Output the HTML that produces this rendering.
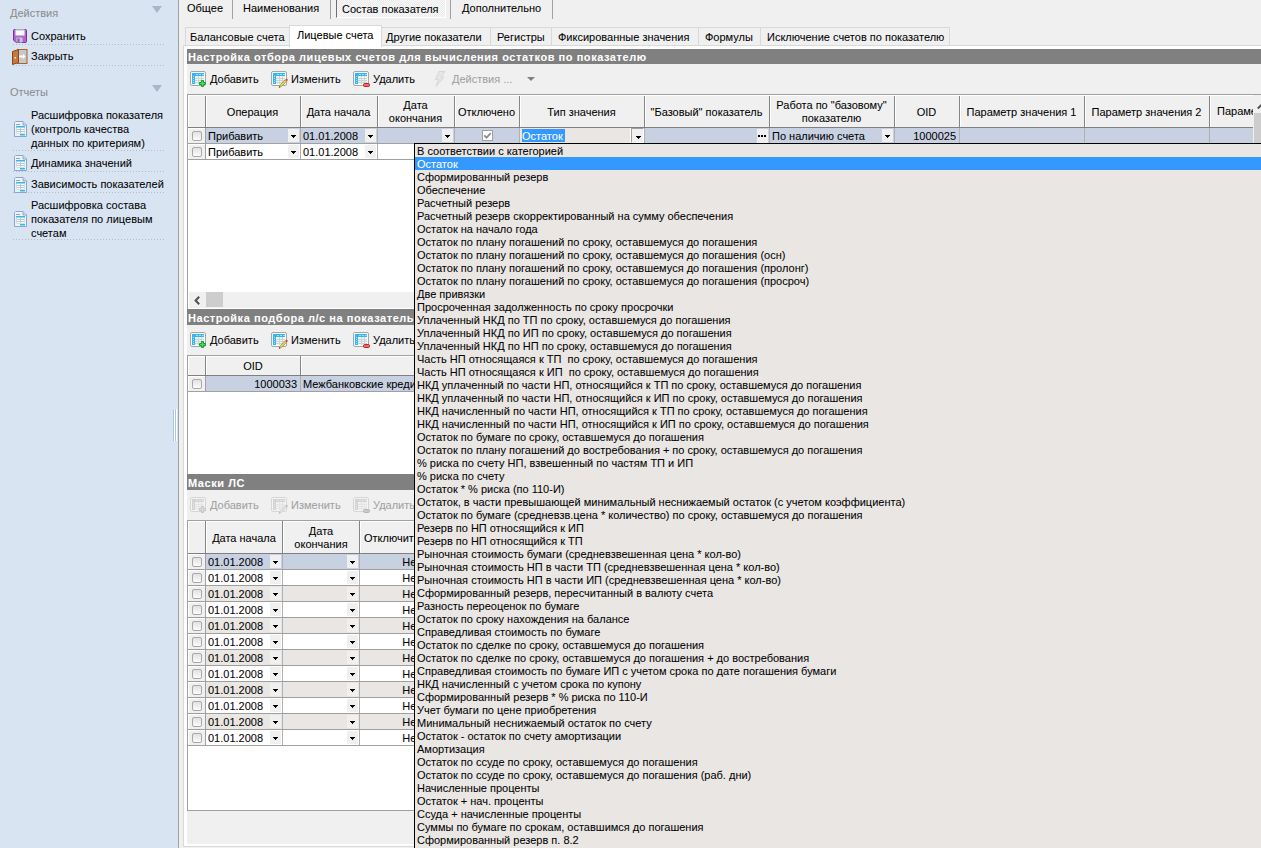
<!DOCTYPE html><html><head><meta charset="utf-8"><style>
*{box-sizing:border-box}
body{margin:0;width:1261px;height:848px;overflow:hidden;position:relative;background:#f0f0f0;font-family:"Liberation Sans",sans-serif;font-size:11px;color:#000;-webkit-text-stroke:0.05px currentColor}
div,svg{position:absolute}
.t{white-space:pre;line-height:13px;height:13px}
.hb{white-space:pre;line-height:13px;height:13px;font-weight:bold;color:#fff;font-size:11px;letter-spacing:0.55px}
</style></head><body>
<div style="left:0px;top:0px;width:178px;height:848px;background:#d9e4f2;"></div>
<div style="left:178px;top:0px;width:1px;height:848px;background:#a0a0a0;"></div>
<div class="t" style="left:10px;top:7px;color:#8c8c8c">Действия</div>
<svg style="left:152px;top:6px" width="10" height="8"><path d="M0 0H10L5 7Z" fill="#a9b6c8"/></svg>
<div class="t" style="left:31px;top:30px;">Сохранить</div>
<div class="t" style="left:31px;top:50px;">Закрыть</div>
<div style="left:13px;top:44px;width:152px;height:1px;background-image:linear-gradient(90deg,#b4bccb 1px,transparent 1px);background-size:3px 1px"></div>
<div style="left:13px;top:65px;width:152px;height:1px;background-image:linear-gradient(90deg,#b4bccb 1px,transparent 1px);background-size:3px 1px"></div>
<div class="t" style="left:10px;top:86px;color:#8c8c8c">Отчеты</div>
<svg style="left:152px;top:85px" width="10" height="8"><path d="M0 0H10L5 7Z" fill="#a9b6c8"/></svg>
<div class="t" style="left:31px;top:109px;">Расшифровка показателя</div>
<div class="t" style="left:31px;top:123px;">(контроль качества</div>
<div class="t" style="left:31px;top:137px;">данных по критериям)</div>
<div style="left:13px;top:150px;width:152px;height:1px;background-image:linear-gradient(90deg,#b4bccb 1px,transparent 1px);background-size:3px 1px"></div>
<div class="t" style="left:31px;top:157px;">Динамика значений</div>
<div style="left:13px;top:171px;width:152px;height:1px;background-image:linear-gradient(90deg,#b4bccb 1px,transparent 1px);background-size:3px 1px"></div>
<div class="t" style="left:31px;top:178px;">Зависимость показателей</div>
<div style="left:13px;top:192px;width:152px;height:1px;background-image:linear-gradient(90deg,#b4bccb 1px,transparent 1px);background-size:3px 1px"></div>
<div class="t" style="left:31px;top:199px;">Расшифровка состава</div>
<div class="t" style="left:31px;top:213px;">показателя по лицевым</div>
<div class="t" style="left:31px;top:227px;">счетам</div>
<div style="left:13px;top:239px;width:152px;height:1px;background-image:linear-gradient(90deg,#b4bccb 1px,transparent 1px);background-size:3px 1px"></div>
<svg style="left:13px;top:29px" width="14" height="14" viewBox="0 0 14 14"><path d="M0.5 1.5Q0.5 0.5 1.5 0.5H12.5Q13.5 0.5 13.5 1.5V12.5Q13.5 13.5 12.5 13.5H3L0.5 11Z" fill="#b066d0" stroke="#7a2f9a"/><rect x="2.5" y="0.5" width="9" height="6" fill="#f4fbfa"/><rect x="2.5" y="0.5" width="9" height="1" fill="#a9bfb8"/><rect x="3.5" y="8.5" width="6" height="5" fill="#c8c8c8"/><rect x="4.5" y="9.5" width="2" height="4" fill="#9a4ac0"/></svg>
<svg style="left:12px;top:49px" width="16" height="16" viewBox="0 0 16 16"><rect x="5.5" y="0.5" width="9.5" height="14" fill="#c8c8c8" stroke="#b0602a"/><path d="M7 7.5H12" stroke="#fff" stroke-width="2"/><path d="M11 5L13.5 7.5L11 10Z" fill="#fff"/><path d="M0.5 2.5L6.5 0.5V13.5L0.5 15.5Z" fill="#c8783a" stroke="#8a4520"/><rect x="2.5" y="8" width="1.5" height="1.5" fill="#eee"/></svg>
<svg style="left:14px;top:121px" width="13" height="16" viewBox="0 0 13 16"><path d="M1.5 0.5H9L12.5 4V15.5H0.5V1.5Z" fill="#eaf4fb" stroke="#8aa6c8"/><path d="M9 0.5V4H12.5" fill="#cfe0f0" stroke="#8aa6c8"/><rect x="2" y="3" width="4" height="1" fill="#8aa6b0"/><rect x="2" y="5" width="9" height="1.5" fill="#3ab4f0"/><rect x="2.5" y="6.5" width="8" height="6" fill="#b4ccd4"/><rect x="3" y="7" width="3" height="1" fill="#fff"/><rect x="7" y="7" width="3" height="1" fill="#fff"/><rect x="3" y="9" width="3" height="1" fill="#fff"/><rect x="7" y="9" width="3" height="1" fill="#fff"/><rect x="3" y="11" width="3" height="1" fill="#fff"/><rect x="7" y="11" width="3" height="1" fill="#fff"/><rect x="6" y="13" width="5" height="1.5" fill="#3ab4f0"/></svg>
<svg style="left:14px;top:155px" width="13" height="16" viewBox="0 0 13 16"><path d="M1.5 0.5H9L12.5 4V15.5H0.5V1.5Z" fill="#eaf4fb" stroke="#8aa6c8"/><path d="M9 0.5V4H12.5" fill="#cfe0f0" stroke="#8aa6c8"/><rect x="2" y="3" width="4" height="1" fill="#8aa6b0"/><rect x="2" y="5" width="9" height="1.5" fill="#3ab4f0"/><rect x="2.5" y="6.5" width="8" height="6" fill="#b4ccd4"/><rect x="3" y="7" width="3" height="1" fill="#fff"/><rect x="7" y="7" width="3" height="1" fill="#fff"/><rect x="3" y="9" width="3" height="1" fill="#fff"/><rect x="7" y="9" width="3" height="1" fill="#fff"/><rect x="3" y="11" width="3" height="1" fill="#fff"/><rect x="7" y="11" width="3" height="1" fill="#fff"/><rect x="6" y="13" width="5" height="1.5" fill="#3ab4f0"/></svg>
<svg style="left:14px;top:177px" width="13" height="16" viewBox="0 0 13 16"><path d="M1.5 0.5H9L12.5 4V15.5H0.5V1.5Z" fill="#eaf4fb" stroke="#8aa6c8"/><path d="M9 0.5V4H12.5" fill="#cfe0f0" stroke="#8aa6c8"/><rect x="2" y="3" width="4" height="1" fill="#8aa6b0"/><rect x="2" y="5" width="9" height="1.5" fill="#3ab4f0"/><rect x="2.5" y="6.5" width="8" height="6" fill="#b4ccd4"/><rect x="3" y="7" width="3" height="1" fill="#fff"/><rect x="7" y="7" width="3" height="1" fill="#fff"/><rect x="3" y="9" width="3" height="1" fill="#fff"/><rect x="7" y="9" width="3" height="1" fill="#fff"/><rect x="3" y="11" width="3" height="1" fill="#fff"/><rect x="7" y="11" width="3" height="1" fill="#fff"/><rect x="6" y="13" width="5" height="1.5" fill="#3ab4f0"/></svg>
<svg style="left:14px;top:211px" width="13" height="16" viewBox="0 0 13 16"><path d="M1.5 0.5H9L12.5 4V15.5H0.5V1.5Z" fill="#eaf4fb" stroke="#8aa6c8"/><path d="M9 0.5V4H12.5" fill="#cfe0f0" stroke="#8aa6c8"/><rect x="2" y="3" width="4" height="1" fill="#8aa6b0"/><rect x="2" y="5" width="9" height="1.5" fill="#3ab4f0"/><rect x="2.5" y="6.5" width="8" height="6" fill="#b4ccd4"/><rect x="3" y="7" width="3" height="1" fill="#fff"/><rect x="7" y="7" width="3" height="1" fill="#fff"/><rect x="3" y="9" width="3" height="1" fill="#fff"/><rect x="7" y="9" width="3" height="1" fill="#fff"/><rect x="3" y="11" width="3" height="1" fill="#fff"/><rect x="7" y="11" width="3" height="1" fill="#fff"/><rect x="6" y="13" width="5" height="1.5" fill="#3ab4f0"/></svg>
<div style="left:173px;top:409px;width:1px;height:32px;background:#b0c6e6;"></div>
<div style="left:174px;top:409px;width:1px;height:32px;background:#fff;"></div>
<div style="left:175px;top:409px;width:1px;height:32px;background:#b0c6e6;"></div>
<div style="left:176px;top:409px;width:1px;height:32px;background:#fff;"></div>
<div style="left:232px;top:0px;width:1px;height:19px;background:#a0a0a0;"></div>
<div style="left:330px;top:0px;width:1px;height:19px;background:#a0a0a0;"></div>
<div style="left:450px;top:0px;width:1px;height:19px;background:#a0a0a0;"></div>
<div style="left:552px;top:0px;width:1px;height:19px;background:#a0a0a0;"></div>
<div class="t" style="left:187px;top:2px;">Общее</div>
<div class="t" style="left:243px;top:2px;">Наименования</div>
<div class="t" style="left:462px;top:2px;">Дополнительно</div>
<div style="left:336px;top:0px;width:110px;height:18px;background:repeating-conic-gradient(#fbfbfb 0 25%,#eaeaea 0 50%) 0 0/2px 2px;border-left:1px solid #6e6e6e;border-bottom:1px solid #fff;border-right:1px solid #fff"></div>
<div class="t" style="left:342px;top:3px;">Состав показателя</div>
<div style="left:185px;top:27px;width:105px;height:19px;background:#f0f0f0;border:1px solid #d9d9d9;border-bottom:none"></div>
<div class="t" style="left:190px;top:31px;">Балансовые счета</div>
<div style="left:381px;top:27px;width:110px;height:19px;background:#f0f0f0;border:1px solid #d9d9d9;border-bottom:none"></div>
<div class="t" style="left:386px;top:31px;">Другие показатели</div>
<div style="left:490px;top:27px;width:62px;height:19px;background:#f0f0f0;border:1px solid #d9d9d9;border-bottom:none"></div>
<div class="t" style="left:497px;top:31px;">Регистры</div>
<div style="left:551px;top:27px;width:148px;height:19px;background:#f0f0f0;border:1px solid #d9d9d9;border-bottom:none"></div>
<div class="t" style="left:558px;top:31px;">Фиксированные значения</div>
<div style="left:698px;top:27px;width:63px;height:19px;background:#f0f0f0;border:1px solid #d9d9d9;border-bottom:none"></div>
<div class="t" style="left:705px;top:31px;">Формулы</div>
<div style="left:760px;top:27px;width:190px;height:19px;background:#f0f0f0;border:1px solid #d9d9d9;border-bottom:none"></div>
<div class="t" style="left:767px;top:31px;">Исключение счетов по показателю</div>
<div style="left:183px;top:45px;width:1100px;height:802px;background:#f0f0f0;border:1px solid #d9d9d9;border-right:none"></div>
<div style="left:184px;top:46px;width:1100px;height:800px;background:transparent;border:3px solid #fff;border-right:none;border-bottom:none"></div>
<div style="left:289px;top:25px;width:93px;height:22px;background:#fff;border:1px solid #d9d9d9;border-bottom:none"></div>
<div class="t" style="left:297px;top:29px;">Лицевые счета</div>
<div style="left:187px;top:49px;width:1074px;height:15px;background:#808080;"></div>
<div class="hb" style="left:188px;top:51px;">Настройка отбора лицевых счетов для вычисления остатков по показателю</div>
<svg style="left:190px;top:71px;" width="17" height="17" viewBox="0 0 17 17"><rect x="0.5" y="0.5" width="15" height="14" rx="1.5" fill="#fbfdfd" stroke="#9aabae"/><rect x="2" y="2" width="12" height="11" fill="#3ab4f0"/><rect x="5" y="5" width="9" height="8" fill="#eef6f8"/><rect x="8" y="5" width="1" height="8" fill="#c5d5d8"/><rect x="11" y="5" width="1" height="8" fill="#c5d5d8"/><rect x="5" y="7" width="9" height="1" fill="#c5d5d8"/><rect x="5" y="9" width="9" height="1" fill="#c5d5d8"/><rect x="5" y="11" width="9" height="1" fill="#c5d5d8"/><rect x="3" y="5" width="1" height="1" fill="#9be3fb"/><rect x="3" y="7" width="1" height="1" fill="#9be3fb"/><rect x="3" y="9" width="1" height="1" fill="#9be3fb"/><rect x="3" y="11" width="1" height="1" fill="#9be3fb"/><rect x="6" y="3" width="2" height="1" fill="#9be3fb"/><rect x="9" y="3" width="2" height="1" fill="#9be3fb"/><rect x="12" y="3" width="2" height="1" fill="#9be3fb"/><path d="M11.5 9.5h2v2h2v2h-2v2h-2v-2h-2v-2h2z" fill="#3ee25c" stroke="#1f9a2a" stroke-width="1"/></svg>
<div class="t" style="left:210px;top:73px;">Добавить</div>
<svg style="left:271px;top:71px;" width="17" height="17" viewBox="0 0 17 17"><rect x="0.5" y="0.5" width="15" height="14" rx="1.5" fill="#fbfdfd" stroke="#9aabae"/><rect x="2" y="2" width="12" height="11" fill="#3ab4f0"/><rect x="5" y="5" width="9" height="8" fill="#eef6f8"/><rect x="8" y="5" width="1" height="8" fill="#c5d5d8"/><rect x="11" y="5" width="1" height="8" fill="#c5d5d8"/><rect x="5" y="7" width="9" height="1" fill="#c5d5d8"/><rect x="5" y="9" width="9" height="1" fill="#c5d5d8"/><rect x="5" y="11" width="9" height="1" fill="#c5d5d8"/><rect x="3" y="5" width="1" height="1" fill="#9be3fb"/><rect x="3" y="7" width="1" height="1" fill="#9be3fb"/><rect x="3" y="9" width="1" height="1" fill="#9be3fb"/><rect x="3" y="11" width="1" height="1" fill="#9be3fb"/><rect x="6" y="3" width="2" height="1" fill="#9be3fb"/><rect x="9" y="3" width="2" height="1" fill="#9be3fb"/><rect x="12" y="3" width="2" height="1" fill="#9be3fb"/><path d="M8 16.5L9.2 13.8L14.3 8.7L15.8 10.2L10.7 15.3Z" fill="#e8d25a" stroke="#9b8a2a" stroke-width="0.7"/><path d="M14.3 8.7L15.2 7.8Q16 7.4 16.6 8.2Q17 9 16.5 9.5L15.8 10.2Z" fill="#e03a3a"/><path d="M8 16.5L8.6 15.2L9.4 16Z" fill="#111"/></svg>
<div class="t" style="left:291px;top:73px;">Изменить</div>
<svg style="left:353px;top:71px;" width="17" height="17" viewBox="0 0 17 17"><rect x="0.5" y="0.5" width="15" height="14" rx="1.5" fill="#fbfdfd" stroke="#9aabae"/><rect x="2" y="2" width="12" height="11" fill="#3ab4f0"/><rect x="5" y="5" width="9" height="8" fill="#eef6f8"/><rect x="8" y="5" width="1" height="8" fill="#c5d5d8"/><rect x="11" y="5" width="1" height="8" fill="#c5d5d8"/><rect x="5" y="7" width="9" height="1" fill="#c5d5d8"/><rect x="5" y="9" width="9" height="1" fill="#c5d5d8"/><rect x="5" y="11" width="9" height="1" fill="#c5d5d8"/><rect x="3" y="5" width="1" height="1" fill="#9be3fb"/><rect x="3" y="7" width="1" height="1" fill="#9be3fb"/><rect x="3" y="9" width="1" height="1" fill="#9be3fb"/><rect x="3" y="11" width="1" height="1" fill="#9be3fb"/><rect x="6" y="3" width="2" height="1" fill="#9be3fb"/><rect x="9" y="3" width="2" height="1" fill="#9be3fb"/><rect x="12" y="3" width="2" height="1" fill="#9be3fb"/><rect x="10.5" y="12.5" width="6" height="3" rx="1.2" fill="#ff6262" stroke="#b82828"/></svg>
<div class="t" style="left:373px;top:73px;">Удалить</div>
<svg style="left:433px;top:71px" width="13" height="16"><path d="M6 0.5L12 0.5L8 6L11 6L3 15.5L5.5 8.5L2.5 8.5Z" fill="#e6e6e6" stroke="#d2d2d2" stroke-width="0.8"/></svg>
<div class="t" style="left:452px;top:73px;color:#a0a0a0">Действия ...</div>
<svg style="left:527px;top:77px" width="8" height="5"><path d="M0 0H8L4 4Z" fill="#808080"/></svg>
<div style="left:187px;top:94px;width:1074px;height:215px;background:#fff;border-top:1px solid #a0a0a0;border-left:1px solid #a0a0a0"></div>
<div style="left:188px;top:95px;width:1065px;height:32px;background:#f0f0f0;"></div>
<div style="left:188px;top:127px;width:1065px;height:1px;background:#808080;"></div>
<div style="left:205px;top:95px;width:1px;height:32px;background:#858585;"></div>
<div style="left:206px;top:95px;width:1px;height:32px;background:#fff;"></div>
<div style="left:300px;top:95px;width:1px;height:32px;background:#858585;"></div>
<div style="left:301px;top:95px;width:1px;height:32px;background:#fff;"></div>
<div style="left:377px;top:95px;width:1px;height:32px;background:#858585;"></div>
<div style="left:378px;top:95px;width:1px;height:32px;background:#fff;"></div>
<div style="left:454px;top:95px;width:1px;height:32px;background:#858585;"></div>
<div style="left:455px;top:95px;width:1px;height:32px;background:#fff;"></div>
<div style="left:519px;top:95px;width:1px;height:32px;background:#858585;"></div>
<div style="left:520px;top:95px;width:1px;height:32px;background:#fff;"></div>
<div style="left:644px;top:95px;width:1px;height:32px;background:#858585;"></div>
<div style="left:645px;top:95px;width:1px;height:32px;background:#fff;"></div>
<div style="left:769px;top:95px;width:1px;height:32px;background:#858585;"></div>
<div style="left:770px;top:95px;width:1px;height:32px;background:#fff;"></div>
<div style="left:894px;top:95px;width:1px;height:32px;background:#858585;"></div>
<div style="left:895px;top:95px;width:1px;height:32px;background:#fff;"></div>
<div style="left:959px;top:95px;width:1px;height:32px;background:#858585;"></div>
<div style="left:960px;top:95px;width:1px;height:32px;background:#fff;"></div>
<div style="left:1084px;top:95px;width:1px;height:32px;background:#858585;"></div>
<div style="left:1085px;top:95px;width:1px;height:32px;background:#fff;"></div>
<div style="left:1209px;top:95px;width:1px;height:32px;background:#858585;"></div>
<div style="left:1210px;top:95px;width:1px;height:32px;background:#fff;"></div>
<div style="left:188px;top:95px;width:1065px;height:1px;background:#fff;"></div>
<div style="left:188px;top:95px;width:1px;height:32px;background:#fff;"></div>
<div class="t" style="left:206.0px;width:93px;text-align:center;top:106px;">Операция</div>
<div class="t" style="left:301.0px;width:75px;text-align:center;top:106px;">Дата начала</div>
<div class="t" style="left:378.0px;width:75px;text-align:center;top:99px;">Дата</div>
<div class="t" style="left:378.0px;width:75px;text-align:center;top:112px;">окончания</div>
<div class="t" style="left:455.0px;width:63px;text-align:center;top:106px;">Отключено</div>
<div class="t" style="left:520.0px;width:123px;text-align:center;top:106px;">Тип значения</div>
<div class="t" style="left:645.0px;width:123px;text-align:center;top:106px;">"Базовый" показатель</div>
<div class="t" style="left:770.0px;width:123px;text-align:center;top:99px;">Работа по "базовому"</div>
<div class="t" style="left:770.0px;width:123px;text-align:center;top:112px;">показателю</div>
<div class="t" style="left:895.0px;width:63px;text-align:center;top:106px;">OID</div>
<div class="t" style="left:960.0px;width:123px;text-align:center;top:106px;">Параметр значения 1</div>
<div class="t" style="left:1085.0px;width:123px;text-align:center;top:106px;">Параметр значения 2</div>
<div class="t" style="left:1217px;top:105px;width:36px;overflow:hidden">Параметр значения 3</div>
<div style="left:188px;top:128px;width:17px;height:15px;background:#f0f0f0;border-top:1px solid #fff;border-left:1px solid #fff"></div>
<div style="left:188px;top:143px;width:1065px;height:1px;background:#a0a0a0;"></div>
<svg style="left:192px;top:131px" width="11" height="11"><defs><linearGradient id="cg" x1="0" y1="0" x2="0" y2="1"><stop offset="0" stop-color="#e0e0e0"/><stop offset="1" stop-color="#fdfdfd"/></linearGradient></defs><rect x="0.5" y="0.5" width="9" height="9" rx="1.5" fill="url(#cg)" stroke="#a8a8a8"/></svg>
<div style="left:206px;top:128px;width:94px;height:15px;background:#c8d1e2;"></div>
<div style="left:300px;top:128px;width:1px;height:15px;background:#b0b0b0;"></div>
<div style="left:301px;top:128px;width:76px;height:15px;background:#c8d1e2;"></div>
<div style="left:377px;top:128px;width:1px;height:15px;background:#b0b0b0;"></div>
<div style="left:378px;top:128px;width:76px;height:15px;background:#c8d1e2;"></div>
<div style="left:454px;top:128px;width:1px;height:15px;background:#b0b0b0;"></div>
<div style="left:455px;top:128px;width:64px;height:15px;background:#c8d1e2;"></div>
<div style="left:519px;top:128px;width:1px;height:15px;background:#b0b0b0;"></div>
<div style="left:520px;top:128px;width:124px;height:15px;background:#c8d1e2;"></div>
<div style="left:644px;top:128px;width:1px;height:15px;background:#b0b0b0;"></div>
<div style="left:645px;top:128px;width:124px;height:15px;background:#c8d1e2;"></div>
<div style="left:769px;top:128px;width:1px;height:15px;background:#b0b0b0;"></div>
<div style="left:770px;top:128px;width:124px;height:15px;background:#c8d1e2;"></div>
<div style="left:894px;top:128px;width:1px;height:15px;background:#b0b0b0;"></div>
<div style="left:895px;top:128px;width:64px;height:15px;background:#c8d1e2;"></div>
<div style="left:959px;top:128px;width:1px;height:15px;background:#b0b0b0;"></div>
<div style="left:960px;top:128px;width:124px;height:15px;background:#c8d1e2;"></div>
<div style="left:1084px;top:128px;width:1px;height:15px;background:#b0b0b0;"></div>
<div style="left:1085px;top:128px;width:124px;height:15px;background:#c8d1e2;"></div>
<div style="left:1209px;top:128px;width:1px;height:15px;background:#b0b0b0;"></div>
<div style="left:1210px;top:128px;width:43px;height:15px;background:#c8d1e2;"></div>
<div style="left:1253px;top:128px;width:1px;height:15px;background:#b0b0b0;"></div>
<div style="left:205px;top:128px;width:1px;height:16px;background:#a0a0a0;"></div>
<div class="t" style="left:208px;top:130px;">Прибавить</div>
<div style="left:288px;top:129px;width:11px;height:13px;background:#f0f0f0;"></div>
<svg style="left:291px;top:135px" width="5" height="3"><path d="M0 0H5V1H4V2H3V3H2V2H1V1H0Z" fill="#000"/></svg>
<div class="t" style="left:303px;top:130px;">01.01.2008</div>
<div style="left:365px;top:129px;width:11px;height:13px;background:#f0f0f0;"></div>
<svg style="left:368px;top:135px" width="5" height="3"><path d="M0 0H5V1H4V2H3V3H2V2H1V1H0Z" fill="#000"/></svg>
<div style="left:442px;top:129px;width:11px;height:13px;background:#f0f0f0;"></div>
<svg style="left:445px;top:135px" width="5" height="3"><path d="M0 0H5V1H4V2H3V3H2V2H1V1H0Z" fill="#000"/></svg>
<svg style="left:482px;top:130px" width="11" height="11"><rect x="0.5" y="0.5" width="10" height="10" fill="#fff" stroke="#a0a0a0"/><path d="M2.3 5.3L4.6 7.6L8.7 3.2" fill="none" stroke="#8c8c8c" stroke-width="1.8"/></svg>
<div style="left:520px;top:128px;width:124px;height:15px;background:#e9e6e3;"></div>
<div style="left:522px;top:129px;width:43px;height:13px;background:#3399ff;"></div>
<div class="t" style="left:522px;top:130px;color:#fff">Остаток</div>
<div style="left:630px;top:128px;width:1px;height:15px;background:#fff;"></div>
<div style="left:631px;top:128px;width:13px;height:15px;background:#f0f0f0;border-left:1px solid #a0a0a0;border-top:1px solid #a0a0a0;border-right:1px solid #fff;border-bottom:1px solid #fff"></div>
<svg style="left:636px;top:136px" width="5" height="3"><path d="M0 0H5V1H4V2H3V3H2V2H1V1H0Z" fill="#000"/></svg>
<div style="left:757px;top:129px;width:11px;height:14px;background:#f0f0f0;"></div>
<div style="left:758px;top:135px;width:2px;height:2px;background:#000;"></div>
<div style="left:761px;top:135px;width:2px;height:2px;background:#000;"></div>
<div style="left:764px;top:135px;width:2px;height:2px;background:#000;"></div>
<div class="t" style="left:772px;top:130px;">По наличию счета</div>
<div style="left:882px;top:129px;width:11px;height:13px;background:#f0f0f0;"></div>
<svg style="left:885px;top:135px" width="5" height="3"><path d="M0 0H5V1H4V2H3V3H2V2H1V1H0Z" fill="#000"/></svg>
<div class="t" style="left:896px;width:60px;text-align:right;top:130px;">1000025</div>
<div style="left:188px;top:144px;width:17px;height:15px;background:#f0f0f0;border-top:1px solid #fff;border-left:1px solid #fff"></div>
<div style="left:188px;top:159px;width:1065px;height:1px;background:#a0a0a0;"></div>
<svg style="left:192px;top:147px" width="11" height="11"><defs><linearGradient id="cg" x1="0" y1="0" x2="0" y2="1"><stop offset="0" stop-color="#e0e0e0"/><stop offset="1" stop-color="#fdfdfd"/></linearGradient></defs><rect x="0.5" y="0.5" width="9" height="9" rx="1.5" fill="url(#cg)" stroke="#a8a8a8"/></svg>
<div style="left:206px;top:144px;width:94px;height:15px;background:#fff;"></div>
<div style="left:300px;top:144px;width:1px;height:15px;background:#b0b0b0;"></div>
<div style="left:301px;top:144px;width:76px;height:15px;background:#fff;"></div>
<div style="left:377px;top:144px;width:1px;height:15px;background:#b0b0b0;"></div>
<div style="left:378px;top:144px;width:76px;height:15px;background:#fff;"></div>
<div style="left:454px;top:144px;width:1px;height:15px;background:#b0b0b0;"></div>
<div style="left:455px;top:144px;width:64px;height:15px;background:#fff;"></div>
<div style="left:519px;top:144px;width:1px;height:15px;background:#b0b0b0;"></div>
<div style="left:520px;top:144px;width:124px;height:15px;background:#fff;"></div>
<div style="left:644px;top:144px;width:1px;height:15px;background:#b0b0b0;"></div>
<div style="left:645px;top:144px;width:124px;height:15px;background:#fff;"></div>
<div style="left:769px;top:144px;width:1px;height:15px;background:#b0b0b0;"></div>
<div style="left:770px;top:144px;width:124px;height:15px;background:#fff;"></div>
<div style="left:894px;top:144px;width:1px;height:15px;background:#b0b0b0;"></div>
<div style="left:895px;top:144px;width:64px;height:15px;background:#fff;"></div>
<div style="left:959px;top:144px;width:1px;height:15px;background:#b0b0b0;"></div>
<div style="left:960px;top:144px;width:124px;height:15px;background:#fff;"></div>
<div style="left:1084px;top:144px;width:1px;height:15px;background:#b0b0b0;"></div>
<div style="left:1085px;top:144px;width:124px;height:15px;background:#fff;"></div>
<div style="left:1209px;top:144px;width:1px;height:15px;background:#b0b0b0;"></div>
<div style="left:1210px;top:144px;width:43px;height:15px;background:#fff;"></div>
<div style="left:1253px;top:144px;width:1px;height:15px;background:#b0b0b0;"></div>
<div style="left:205px;top:144px;width:1px;height:16px;background:#a0a0a0;"></div>
<div class="t" style="left:208px;top:146px;">Прибавить</div>
<div style="left:288px;top:145px;width:11px;height:13px;background:#f0f0f0;"></div>
<svg style="left:291px;top:151px" width="5" height="3"><path d="M0 0H5V1H4V2H3V3H2V2H1V1H0Z" fill="#000"/></svg>
<div class="t" style="left:303px;top:146px;">01.01.2008</div>
<div style="left:365px;top:145px;width:11px;height:13px;background:#f0f0f0;"></div>
<svg style="left:368px;top:151px" width="5" height="3"><path d="M0 0H5V1H4V2H3V3H2V2H1V1H0Z" fill="#000"/></svg>
<div style="left:1253px;top:95px;width:8px;height:214px;background:#f0f0f0;"></div>
<svg style="left:1257px;top:103px" width="8" height="7"><path d="M0.8 5.5L4.5 1.8L8.2 5.5" fill="none" stroke="#505050" stroke-width="2"/></svg>
<div style="left:1254px;top:113px;width:7px;height:190px;background:#cdcdcd;"></div>
<div style="left:189px;top:292px;width:1064px;height:16px;background:#f0f0f0;"></div>
<svg style="left:194px;top:296px" width="6" height="9"><path d="M5.2 0.8L1.6 4.5L5.2 8.2" fill="none" stroke="#505050" stroke-width="2"/></svg>
<div style="left:206px;top:292px;width:17px;height:15px;background:#cdcdcd;"></div>
<div style="left:187px;top:309px;width:1074px;height:16px;background:#808080;"></div>
<div class="hb" style="left:188px;top:312px;">Настройка подбора л/с на показатель</div>
<svg style="left:190px;top:332px;" width="17" height="17" viewBox="0 0 17 17"><rect x="0.5" y="0.5" width="15" height="14" rx="1.5" fill="#fbfdfd" stroke="#9aabae"/><rect x="2" y="2" width="12" height="11" fill="#3ab4f0"/><rect x="5" y="5" width="9" height="8" fill="#eef6f8"/><rect x="8" y="5" width="1" height="8" fill="#c5d5d8"/><rect x="11" y="5" width="1" height="8" fill="#c5d5d8"/><rect x="5" y="7" width="9" height="1" fill="#c5d5d8"/><rect x="5" y="9" width="9" height="1" fill="#c5d5d8"/><rect x="5" y="11" width="9" height="1" fill="#c5d5d8"/><rect x="3" y="5" width="1" height="1" fill="#9be3fb"/><rect x="3" y="7" width="1" height="1" fill="#9be3fb"/><rect x="3" y="9" width="1" height="1" fill="#9be3fb"/><rect x="3" y="11" width="1" height="1" fill="#9be3fb"/><rect x="6" y="3" width="2" height="1" fill="#9be3fb"/><rect x="9" y="3" width="2" height="1" fill="#9be3fb"/><rect x="12" y="3" width="2" height="1" fill="#9be3fb"/><path d="M11.5 9.5h2v2h2v2h-2v2h-2v-2h-2v-2h2z" fill="#3ee25c" stroke="#1f9a2a" stroke-width="1"/></svg>
<div class="t" style="left:210px;top:334px;">Добавить</div>
<svg style="left:271px;top:332px;" width="17" height="17" viewBox="0 0 17 17"><rect x="0.5" y="0.5" width="15" height="14" rx="1.5" fill="#fbfdfd" stroke="#9aabae"/><rect x="2" y="2" width="12" height="11" fill="#3ab4f0"/><rect x="5" y="5" width="9" height="8" fill="#eef6f8"/><rect x="8" y="5" width="1" height="8" fill="#c5d5d8"/><rect x="11" y="5" width="1" height="8" fill="#c5d5d8"/><rect x="5" y="7" width="9" height="1" fill="#c5d5d8"/><rect x="5" y="9" width="9" height="1" fill="#c5d5d8"/><rect x="5" y="11" width="9" height="1" fill="#c5d5d8"/><rect x="3" y="5" width="1" height="1" fill="#9be3fb"/><rect x="3" y="7" width="1" height="1" fill="#9be3fb"/><rect x="3" y="9" width="1" height="1" fill="#9be3fb"/><rect x="3" y="11" width="1" height="1" fill="#9be3fb"/><rect x="6" y="3" width="2" height="1" fill="#9be3fb"/><rect x="9" y="3" width="2" height="1" fill="#9be3fb"/><rect x="12" y="3" width="2" height="1" fill="#9be3fb"/><path d="M8 16.5L9.2 13.8L14.3 8.7L15.8 10.2L10.7 15.3Z" fill="#e8d25a" stroke="#9b8a2a" stroke-width="0.7"/><path d="M14.3 8.7L15.2 7.8Q16 7.4 16.6 8.2Q17 9 16.5 9.5L15.8 10.2Z" fill="#e03a3a"/><path d="M8 16.5L8.6 15.2L9.4 16Z" fill="#111"/></svg>
<div class="t" style="left:291px;top:334px;">Изменить</div>
<svg style="left:353px;top:332px;" width="17" height="17" viewBox="0 0 17 17"><rect x="0.5" y="0.5" width="15" height="14" rx="1.5" fill="#fbfdfd" stroke="#9aabae"/><rect x="2" y="2" width="12" height="11" fill="#3ab4f0"/><rect x="5" y="5" width="9" height="8" fill="#eef6f8"/><rect x="8" y="5" width="1" height="8" fill="#c5d5d8"/><rect x="11" y="5" width="1" height="8" fill="#c5d5d8"/><rect x="5" y="7" width="9" height="1" fill="#c5d5d8"/><rect x="5" y="9" width="9" height="1" fill="#c5d5d8"/><rect x="5" y="11" width="9" height="1" fill="#c5d5d8"/><rect x="3" y="5" width="1" height="1" fill="#9be3fb"/><rect x="3" y="7" width="1" height="1" fill="#9be3fb"/><rect x="3" y="9" width="1" height="1" fill="#9be3fb"/><rect x="3" y="11" width="1" height="1" fill="#9be3fb"/><rect x="6" y="3" width="2" height="1" fill="#9be3fb"/><rect x="9" y="3" width="2" height="1" fill="#9be3fb"/><rect x="12" y="3" width="2" height="1" fill="#9be3fb"/><rect x="10.5" y="12.5" width="6" height="3" rx="1.2" fill="#ff6262" stroke="#b82828"/></svg>
<div class="t" style="left:373px;top:334px;">Удалить</div>
<div style="left:187px;top:355px;width:1074px;height:119px;background:#fff;border-top:1px solid #a0a0a0;border-left:1px solid #a0a0a0"></div>
<div style="left:188px;top:356px;width:1073px;height:19px;background:#f0f0f0;border-top:1px solid #fff;border-left:1px solid #fff"></div>
<div style="left:188px;top:375px;width:1073px;height:1px;background:#808080;"></div>
<div style="left:205px;top:356px;width:1px;height:19px;background:#858585;"></div>
<div style="left:206px;top:356px;width:1px;height:19px;background:#fff;"></div>
<div style="left:300px;top:356px;width:1px;height:19px;background:#858585;"></div>
<div style="left:301px;top:356px;width:1px;height:19px;background:#fff;"></div>
<div class="t" style="left:208.0px;width:90px;text-align:center;top:360px;">OID</div>
<div style="left:188px;top:376px;width:17px;height:15px;background:#f0f0f0;border-top:1px solid #fff;border-left:1px solid #fff"></div>
<div style="left:188px;top:391px;width:1073px;height:1px;background:#a0a0a0;"></div>
<div style="left:205px;top:376px;width:1px;height:16px;background:#a0a0a0;"></div>
<svg style="left:192px;top:379px" width="11" height="11"><defs><linearGradient id="cg" x1="0" y1="0" x2="0" y2="1"><stop offset="0" stop-color="#e0e0e0"/><stop offset="1" stop-color="#fdfdfd"/></linearGradient></defs><rect x="0.5" y="0.5" width="9" height="9" rx="1.5" fill="url(#cg)" stroke="#a8a8a8"/></svg>
<div style="left:206px;top:376px;width:94px;height:15px;background:#c8d1e2;"></div>
<div style="left:300px;top:376px;width:1px;height:15px;background:#b0b0b0;"></div>
<div style="left:301px;top:376px;width:960px;height:15px;background:#c8d1e2;"></div>
<div class="t" style="left:217px;width:80px;text-align:right;top:378px;">1000033</div>
<div class="t" style="left:303px;top:378px;">Межбанковские кредиты</div>
<div style="left:187px;top:474px;width:1074px;height:16px;background:#808080;"></div>
<div class="hb" style="left:188px;top:477px;">Маски ЛС</div>
<svg style="left:190px;top:497px;opacity:0.35;filter:grayscale(1);" width="17" height="17" viewBox="0 0 17 17"><rect x="0.5" y="0.5" width="15" height="14" rx="1.5" fill="#fbfdfd" stroke="#9aabae"/><rect x="2" y="2" width="12" height="11" fill="#3ab4f0"/><rect x="5" y="5" width="9" height="8" fill="#eef6f8"/><rect x="8" y="5" width="1" height="8" fill="#c5d5d8"/><rect x="11" y="5" width="1" height="8" fill="#c5d5d8"/><rect x="5" y="7" width="9" height="1" fill="#c5d5d8"/><rect x="5" y="9" width="9" height="1" fill="#c5d5d8"/><rect x="5" y="11" width="9" height="1" fill="#c5d5d8"/><rect x="3" y="5" width="1" height="1" fill="#9be3fb"/><rect x="3" y="7" width="1" height="1" fill="#9be3fb"/><rect x="3" y="9" width="1" height="1" fill="#9be3fb"/><rect x="3" y="11" width="1" height="1" fill="#9be3fb"/><rect x="6" y="3" width="2" height="1" fill="#9be3fb"/><rect x="9" y="3" width="2" height="1" fill="#9be3fb"/><rect x="12" y="3" width="2" height="1" fill="#9be3fb"/><path d="M11.5 9.5h2v2h2v2h-2v2h-2v-2h-2v-2h2z" fill="#3ee25c" stroke="#1f9a2a" stroke-width="1"/></svg>
<div class="t" style="left:210px;top:499px;color:#a0a0a0;">Добавить</div>
<svg style="left:271px;top:497px;opacity:0.35;filter:grayscale(1);" width="17" height="17" viewBox="0 0 17 17"><rect x="0.5" y="0.5" width="15" height="14" rx="1.5" fill="#fbfdfd" stroke="#9aabae"/><rect x="2" y="2" width="12" height="11" fill="#3ab4f0"/><rect x="5" y="5" width="9" height="8" fill="#eef6f8"/><rect x="8" y="5" width="1" height="8" fill="#c5d5d8"/><rect x="11" y="5" width="1" height="8" fill="#c5d5d8"/><rect x="5" y="7" width="9" height="1" fill="#c5d5d8"/><rect x="5" y="9" width="9" height="1" fill="#c5d5d8"/><rect x="5" y="11" width="9" height="1" fill="#c5d5d8"/><rect x="3" y="5" width="1" height="1" fill="#9be3fb"/><rect x="3" y="7" width="1" height="1" fill="#9be3fb"/><rect x="3" y="9" width="1" height="1" fill="#9be3fb"/><rect x="3" y="11" width="1" height="1" fill="#9be3fb"/><rect x="6" y="3" width="2" height="1" fill="#9be3fb"/><rect x="9" y="3" width="2" height="1" fill="#9be3fb"/><rect x="12" y="3" width="2" height="1" fill="#9be3fb"/><path d="M8 16.5L9.2 13.8L14.3 8.7L15.8 10.2L10.7 15.3Z" fill="#e8d25a" stroke="#9b8a2a" stroke-width="0.7"/><path d="M14.3 8.7L15.2 7.8Q16 7.4 16.6 8.2Q17 9 16.5 9.5L15.8 10.2Z" fill="#e03a3a"/><path d="M8 16.5L8.6 15.2L9.4 16Z" fill="#111"/></svg>
<div class="t" style="left:291px;top:499px;color:#a0a0a0;">Изменить</div>
<svg style="left:353px;top:497px;opacity:0.35;filter:grayscale(1);" width="17" height="17" viewBox="0 0 17 17"><rect x="0.5" y="0.5" width="15" height="14" rx="1.5" fill="#fbfdfd" stroke="#9aabae"/><rect x="2" y="2" width="12" height="11" fill="#3ab4f0"/><rect x="5" y="5" width="9" height="8" fill="#eef6f8"/><rect x="8" y="5" width="1" height="8" fill="#c5d5d8"/><rect x="11" y="5" width="1" height="8" fill="#c5d5d8"/><rect x="5" y="7" width="9" height="1" fill="#c5d5d8"/><rect x="5" y="9" width="9" height="1" fill="#c5d5d8"/><rect x="5" y="11" width="9" height="1" fill="#c5d5d8"/><rect x="3" y="5" width="1" height="1" fill="#9be3fb"/><rect x="3" y="7" width="1" height="1" fill="#9be3fb"/><rect x="3" y="9" width="1" height="1" fill="#9be3fb"/><rect x="3" y="11" width="1" height="1" fill="#9be3fb"/><rect x="6" y="3" width="2" height="1" fill="#9be3fb"/><rect x="9" y="3" width="2" height="1" fill="#9be3fb"/><rect x="12" y="3" width="2" height="1" fill="#9be3fb"/><rect x="10.5" y="12.5" width="6" height="3" rx="1.2" fill="#ff6262" stroke="#b82828"/></svg>
<div class="t" style="left:373px;top:499px;color:#a0a0a0;">Удалить</div>
<div style="left:187px;top:520px;width:1074px;height:291px;background:#fff;border-top:1px solid #a0a0a0;border-left:1px solid #a0a0a0;border-bottom:1px solid #a0a0a0"></div>
<div style="left:188px;top:521px;width:1073px;height:32px;background:#f0f0f0;border-top:1px solid #fff;border-left:1px solid #fff"></div>
<div style="left:188px;top:553px;width:1073px;height:1px;background:#808080;"></div>
<div style="left:205px;top:521px;width:1px;height:32px;background:#858585;"></div>
<div style="left:206px;top:521px;width:1px;height:32px;background:#fff;"></div>
<div style="left:282px;top:521px;width:1px;height:32px;background:#858585;"></div>
<div style="left:283px;top:521px;width:1px;height:32px;background:#fff;"></div>
<div style="left:359px;top:521px;width:1px;height:32px;background:#858585;"></div>
<div style="left:360px;top:521px;width:1px;height:32px;background:#fff;"></div>
<div style="left:480px;top:521px;width:1px;height:32px;background:#858585;"></div>
<div style="left:481px;top:521px;width:1px;height:32px;background:#fff;"></div>
<div class="t" style="left:206.5px;width:75px;text-align:center;top:532px;">Дата начала</div>
<div class="t" style="left:283.5px;width:75px;text-align:center;top:525px;">Дата</div>
<div class="t" style="left:283.5px;width:75px;text-align:center;top:538px;">окончания</div>
<div class="t" style="left:364px;top:532px;">Отключить</div>
<div style="left:188px;top:554px;width:17px;height:15px;background:#f0f0f0;border-top:1px solid #fff;border-left:1px solid #fff"></div>
<div style="left:188px;top:569px;width:1073px;height:1px;background:#a0a0a0;"></div>
<div style="left:205px;top:554px;width:1px;height:16px;background:#a0a0a0;"></div>
<svg style="left:192px;top:557px" width="11" height="11"><defs><linearGradient id="cg" x1="0" y1="0" x2="0" y2="1"><stop offset="0" stop-color="#e0e0e0"/><stop offset="1" stop-color="#fdfdfd"/></linearGradient></defs><rect x="0.5" y="0.5" width="9" height="9" rx="1.5" fill="url(#cg)" stroke="#a8a8a8"/></svg>
<div style="left:206px;top:554px;width:76px;height:15px;background:#c8d1e2;"></div>
<div style="left:282px;top:554px;width:1px;height:15px;background:#b0b0b0;"></div>
<div style="left:283px;top:554px;width:76px;height:15px;background:#c8d1e2;"></div>
<div style="left:359px;top:554px;width:1px;height:15px;background:#b0b0b0;"></div>
<div style="left:360px;top:554px;width:901px;height:15px;background:#c8d1e2;"></div>
<div class="t" style="left:208px;top:556px;">01.01.2008</div>
<div style="left:270px;top:555px;width:11px;height:13px;background:#f0f0f0;"></div>
<svg style="left:273px;top:561px" width="5" height="3"><path d="M0 0H5V1H4V2H3V3H2V2H1V1H0Z" fill="#000"/></svg>
<div style="left:347px;top:555px;width:11px;height:13px;background:#f0f0f0;"></div>
<svg style="left:350px;top:561px" width="5" height="3"><path d="M0 0H5V1H4V2H3V3H2V2H1V1H0Z" fill="#000"/></svg>
<div class="t" style="left:361px;width:60px;text-align:right;top:556px;">Нет</div>
<div style="left:188px;top:570px;width:17px;height:15px;background:#f0f0f0;border-top:1px solid #fff;border-left:1px solid #fff"></div>
<div style="left:188px;top:585px;width:1073px;height:1px;background:#a0a0a0;"></div>
<div style="left:205px;top:570px;width:1px;height:16px;background:#a0a0a0;"></div>
<svg style="left:192px;top:573px" width="11" height="11"><defs><linearGradient id="cg" x1="0" y1="0" x2="0" y2="1"><stop offset="0" stop-color="#e0e0e0"/><stop offset="1" stop-color="#fdfdfd"/></linearGradient></defs><rect x="0.5" y="0.5" width="9" height="9" rx="1.5" fill="url(#cg)" stroke="#a8a8a8"/></svg>
<div style="left:206px;top:570px;width:76px;height:15px;background:#fff;"></div>
<div style="left:282px;top:570px;width:1px;height:15px;background:#b0b0b0;"></div>
<div style="left:283px;top:570px;width:76px;height:15px;background:#fff;"></div>
<div style="left:359px;top:570px;width:1px;height:15px;background:#b0b0b0;"></div>
<div style="left:360px;top:570px;width:901px;height:15px;background:#fff;"></div>
<div class="t" style="left:208px;top:572px;">01.01.2008</div>
<div style="left:270px;top:571px;width:11px;height:13px;background:#f0f0f0;"></div>
<svg style="left:273px;top:577px" width="5" height="3"><path d="M0 0H5V1H4V2H3V3H2V2H1V1H0Z" fill="#000"/></svg>
<div style="left:347px;top:571px;width:11px;height:13px;background:#f0f0f0;"></div>
<svg style="left:350px;top:577px" width="5" height="3"><path d="M0 0H5V1H4V2H3V3H2V2H1V1H0Z" fill="#000"/></svg>
<div class="t" style="left:361px;width:60px;text-align:right;top:572px;">Нет</div>
<div style="left:188px;top:586px;width:17px;height:15px;background:#f0f0f0;border-top:1px solid #fff;border-left:1px solid #fff"></div>
<div style="left:188px;top:601px;width:1073px;height:1px;background:#a0a0a0;"></div>
<div style="left:205px;top:586px;width:1px;height:16px;background:#a0a0a0;"></div>
<svg style="left:192px;top:589px" width="11" height="11"><defs><linearGradient id="cg" x1="0" y1="0" x2="0" y2="1"><stop offset="0" stop-color="#e0e0e0"/><stop offset="1" stop-color="#fdfdfd"/></linearGradient></defs><rect x="0.5" y="0.5" width="9" height="9" rx="1.5" fill="url(#cg)" stroke="#a8a8a8"/></svg>
<div style="left:206px;top:586px;width:76px;height:15px;background:#e9e6e3;"></div>
<div style="left:282px;top:586px;width:1px;height:15px;background:#b0b0b0;"></div>
<div style="left:283px;top:586px;width:76px;height:15px;background:#e9e6e3;"></div>
<div style="left:359px;top:586px;width:1px;height:15px;background:#b0b0b0;"></div>
<div style="left:360px;top:586px;width:901px;height:15px;background:#e9e6e3;"></div>
<div class="t" style="left:208px;top:588px;">01.01.2008</div>
<div style="left:270px;top:587px;width:11px;height:13px;background:#f0f0f0;"></div>
<svg style="left:273px;top:593px" width="5" height="3"><path d="M0 0H5V1H4V2H3V3H2V2H1V1H0Z" fill="#000"/></svg>
<div style="left:347px;top:587px;width:11px;height:13px;background:#f0f0f0;"></div>
<svg style="left:350px;top:593px" width="5" height="3"><path d="M0 0H5V1H4V2H3V3H2V2H1V1H0Z" fill="#000"/></svg>
<div class="t" style="left:361px;width:60px;text-align:right;top:588px;">Нет</div>
<div style="left:188px;top:602px;width:17px;height:15px;background:#f0f0f0;border-top:1px solid #fff;border-left:1px solid #fff"></div>
<div style="left:188px;top:617px;width:1073px;height:1px;background:#a0a0a0;"></div>
<div style="left:205px;top:602px;width:1px;height:16px;background:#a0a0a0;"></div>
<svg style="left:192px;top:605px" width="11" height="11"><defs><linearGradient id="cg" x1="0" y1="0" x2="0" y2="1"><stop offset="0" stop-color="#e0e0e0"/><stop offset="1" stop-color="#fdfdfd"/></linearGradient></defs><rect x="0.5" y="0.5" width="9" height="9" rx="1.5" fill="url(#cg)" stroke="#a8a8a8"/></svg>
<div style="left:206px;top:602px;width:76px;height:15px;background:#fff;"></div>
<div style="left:282px;top:602px;width:1px;height:15px;background:#b0b0b0;"></div>
<div style="left:283px;top:602px;width:76px;height:15px;background:#fff;"></div>
<div style="left:359px;top:602px;width:1px;height:15px;background:#b0b0b0;"></div>
<div style="left:360px;top:602px;width:901px;height:15px;background:#fff;"></div>
<div class="t" style="left:208px;top:604px;">01.01.2008</div>
<div style="left:270px;top:603px;width:11px;height:13px;background:#f0f0f0;"></div>
<svg style="left:273px;top:609px" width="5" height="3"><path d="M0 0H5V1H4V2H3V3H2V2H1V1H0Z" fill="#000"/></svg>
<div style="left:347px;top:603px;width:11px;height:13px;background:#f0f0f0;"></div>
<svg style="left:350px;top:609px" width="5" height="3"><path d="M0 0H5V1H4V2H3V3H2V2H1V1H0Z" fill="#000"/></svg>
<div class="t" style="left:361px;width:60px;text-align:right;top:604px;">Нет</div>
<div style="left:188px;top:618px;width:17px;height:15px;background:#f0f0f0;border-top:1px solid #fff;border-left:1px solid #fff"></div>
<div style="left:188px;top:633px;width:1073px;height:1px;background:#a0a0a0;"></div>
<div style="left:205px;top:618px;width:1px;height:16px;background:#a0a0a0;"></div>
<svg style="left:192px;top:621px" width="11" height="11"><defs><linearGradient id="cg" x1="0" y1="0" x2="0" y2="1"><stop offset="0" stop-color="#e0e0e0"/><stop offset="1" stop-color="#fdfdfd"/></linearGradient></defs><rect x="0.5" y="0.5" width="9" height="9" rx="1.5" fill="url(#cg)" stroke="#a8a8a8"/></svg>
<div style="left:206px;top:618px;width:76px;height:15px;background:#e9e6e3;"></div>
<div style="left:282px;top:618px;width:1px;height:15px;background:#b0b0b0;"></div>
<div style="left:283px;top:618px;width:76px;height:15px;background:#e9e6e3;"></div>
<div style="left:359px;top:618px;width:1px;height:15px;background:#b0b0b0;"></div>
<div style="left:360px;top:618px;width:901px;height:15px;background:#e9e6e3;"></div>
<div class="t" style="left:208px;top:620px;">01.01.2008</div>
<div style="left:270px;top:619px;width:11px;height:13px;background:#f0f0f0;"></div>
<svg style="left:273px;top:625px" width="5" height="3"><path d="M0 0H5V1H4V2H3V3H2V2H1V1H0Z" fill="#000"/></svg>
<div style="left:347px;top:619px;width:11px;height:13px;background:#f0f0f0;"></div>
<svg style="left:350px;top:625px" width="5" height="3"><path d="M0 0H5V1H4V2H3V3H2V2H1V1H0Z" fill="#000"/></svg>
<div class="t" style="left:361px;width:60px;text-align:right;top:620px;">Нет</div>
<div style="left:188px;top:634px;width:17px;height:15px;background:#f0f0f0;border-top:1px solid #fff;border-left:1px solid #fff"></div>
<div style="left:188px;top:649px;width:1073px;height:1px;background:#a0a0a0;"></div>
<div style="left:205px;top:634px;width:1px;height:16px;background:#a0a0a0;"></div>
<svg style="left:192px;top:637px" width="11" height="11"><defs><linearGradient id="cg" x1="0" y1="0" x2="0" y2="1"><stop offset="0" stop-color="#e0e0e0"/><stop offset="1" stop-color="#fdfdfd"/></linearGradient></defs><rect x="0.5" y="0.5" width="9" height="9" rx="1.5" fill="url(#cg)" stroke="#a8a8a8"/></svg>
<div style="left:206px;top:634px;width:76px;height:15px;background:#fff;"></div>
<div style="left:282px;top:634px;width:1px;height:15px;background:#b0b0b0;"></div>
<div style="left:283px;top:634px;width:76px;height:15px;background:#fff;"></div>
<div style="left:359px;top:634px;width:1px;height:15px;background:#b0b0b0;"></div>
<div style="left:360px;top:634px;width:901px;height:15px;background:#fff;"></div>
<div class="t" style="left:208px;top:636px;">01.01.2008</div>
<div style="left:270px;top:635px;width:11px;height:13px;background:#f0f0f0;"></div>
<svg style="left:273px;top:641px" width="5" height="3"><path d="M0 0H5V1H4V2H3V3H2V2H1V1H0Z" fill="#000"/></svg>
<div style="left:347px;top:635px;width:11px;height:13px;background:#f0f0f0;"></div>
<svg style="left:350px;top:641px" width="5" height="3"><path d="M0 0H5V1H4V2H3V3H2V2H1V1H0Z" fill="#000"/></svg>
<div class="t" style="left:361px;width:60px;text-align:right;top:636px;">Нет</div>
<div style="left:188px;top:650px;width:17px;height:15px;background:#f0f0f0;border-top:1px solid #fff;border-left:1px solid #fff"></div>
<div style="left:188px;top:665px;width:1073px;height:1px;background:#a0a0a0;"></div>
<div style="left:205px;top:650px;width:1px;height:16px;background:#a0a0a0;"></div>
<svg style="left:192px;top:653px" width="11" height="11"><defs><linearGradient id="cg" x1="0" y1="0" x2="0" y2="1"><stop offset="0" stop-color="#e0e0e0"/><stop offset="1" stop-color="#fdfdfd"/></linearGradient></defs><rect x="0.5" y="0.5" width="9" height="9" rx="1.5" fill="url(#cg)" stroke="#a8a8a8"/></svg>
<div style="left:206px;top:650px;width:76px;height:15px;background:#e9e6e3;"></div>
<div style="left:282px;top:650px;width:1px;height:15px;background:#b0b0b0;"></div>
<div style="left:283px;top:650px;width:76px;height:15px;background:#e9e6e3;"></div>
<div style="left:359px;top:650px;width:1px;height:15px;background:#b0b0b0;"></div>
<div style="left:360px;top:650px;width:901px;height:15px;background:#e9e6e3;"></div>
<div class="t" style="left:208px;top:652px;">01.01.2008</div>
<div style="left:270px;top:651px;width:11px;height:13px;background:#f0f0f0;"></div>
<svg style="left:273px;top:657px" width="5" height="3"><path d="M0 0H5V1H4V2H3V3H2V2H1V1H0Z" fill="#000"/></svg>
<div style="left:347px;top:651px;width:11px;height:13px;background:#f0f0f0;"></div>
<svg style="left:350px;top:657px" width="5" height="3"><path d="M0 0H5V1H4V2H3V3H2V2H1V1H0Z" fill="#000"/></svg>
<div class="t" style="left:361px;width:60px;text-align:right;top:652px;">Нет</div>
<div style="left:188px;top:666px;width:17px;height:15px;background:#f0f0f0;border-top:1px solid #fff;border-left:1px solid #fff"></div>
<div style="left:188px;top:681px;width:1073px;height:1px;background:#a0a0a0;"></div>
<div style="left:205px;top:666px;width:1px;height:16px;background:#a0a0a0;"></div>
<svg style="left:192px;top:669px" width="11" height="11"><defs><linearGradient id="cg" x1="0" y1="0" x2="0" y2="1"><stop offset="0" stop-color="#e0e0e0"/><stop offset="1" stop-color="#fdfdfd"/></linearGradient></defs><rect x="0.5" y="0.5" width="9" height="9" rx="1.5" fill="url(#cg)" stroke="#a8a8a8"/></svg>
<div style="left:206px;top:666px;width:76px;height:15px;background:#fff;"></div>
<div style="left:282px;top:666px;width:1px;height:15px;background:#b0b0b0;"></div>
<div style="left:283px;top:666px;width:76px;height:15px;background:#fff;"></div>
<div style="left:359px;top:666px;width:1px;height:15px;background:#b0b0b0;"></div>
<div style="left:360px;top:666px;width:901px;height:15px;background:#fff;"></div>
<div class="t" style="left:208px;top:668px;">01.01.2008</div>
<div style="left:270px;top:667px;width:11px;height:13px;background:#f0f0f0;"></div>
<svg style="left:273px;top:673px" width="5" height="3"><path d="M0 0H5V1H4V2H3V3H2V2H1V1H0Z" fill="#000"/></svg>
<div style="left:347px;top:667px;width:11px;height:13px;background:#f0f0f0;"></div>
<svg style="left:350px;top:673px" width="5" height="3"><path d="M0 0H5V1H4V2H3V3H2V2H1V1H0Z" fill="#000"/></svg>
<div class="t" style="left:361px;width:60px;text-align:right;top:668px;">Нет</div>
<div style="left:188px;top:682px;width:17px;height:15px;background:#f0f0f0;border-top:1px solid #fff;border-left:1px solid #fff"></div>
<div style="left:188px;top:697px;width:1073px;height:1px;background:#a0a0a0;"></div>
<div style="left:205px;top:682px;width:1px;height:16px;background:#a0a0a0;"></div>
<svg style="left:192px;top:685px" width="11" height="11"><defs><linearGradient id="cg" x1="0" y1="0" x2="0" y2="1"><stop offset="0" stop-color="#e0e0e0"/><stop offset="1" stop-color="#fdfdfd"/></linearGradient></defs><rect x="0.5" y="0.5" width="9" height="9" rx="1.5" fill="url(#cg)" stroke="#a8a8a8"/></svg>
<div style="left:206px;top:682px;width:76px;height:15px;background:#e9e6e3;"></div>
<div style="left:282px;top:682px;width:1px;height:15px;background:#b0b0b0;"></div>
<div style="left:283px;top:682px;width:76px;height:15px;background:#e9e6e3;"></div>
<div style="left:359px;top:682px;width:1px;height:15px;background:#b0b0b0;"></div>
<div style="left:360px;top:682px;width:901px;height:15px;background:#e9e6e3;"></div>
<div class="t" style="left:208px;top:684px;">01.01.2008</div>
<div style="left:270px;top:683px;width:11px;height:13px;background:#f0f0f0;"></div>
<svg style="left:273px;top:689px" width="5" height="3"><path d="M0 0H5V1H4V2H3V3H2V2H1V1H0Z" fill="#000"/></svg>
<div style="left:347px;top:683px;width:11px;height:13px;background:#f0f0f0;"></div>
<svg style="left:350px;top:689px" width="5" height="3"><path d="M0 0H5V1H4V2H3V3H2V2H1V1H0Z" fill="#000"/></svg>
<div class="t" style="left:361px;width:60px;text-align:right;top:684px;">Нет</div>
<div style="left:188px;top:698px;width:17px;height:15px;background:#f0f0f0;border-top:1px solid #fff;border-left:1px solid #fff"></div>
<div style="left:188px;top:713px;width:1073px;height:1px;background:#a0a0a0;"></div>
<div style="left:205px;top:698px;width:1px;height:16px;background:#a0a0a0;"></div>
<svg style="left:192px;top:701px" width="11" height="11"><defs><linearGradient id="cg" x1="0" y1="0" x2="0" y2="1"><stop offset="0" stop-color="#e0e0e0"/><stop offset="1" stop-color="#fdfdfd"/></linearGradient></defs><rect x="0.5" y="0.5" width="9" height="9" rx="1.5" fill="url(#cg)" stroke="#a8a8a8"/></svg>
<div style="left:206px;top:698px;width:76px;height:15px;background:#fff;"></div>
<div style="left:282px;top:698px;width:1px;height:15px;background:#b0b0b0;"></div>
<div style="left:283px;top:698px;width:76px;height:15px;background:#fff;"></div>
<div style="left:359px;top:698px;width:1px;height:15px;background:#b0b0b0;"></div>
<div style="left:360px;top:698px;width:901px;height:15px;background:#fff;"></div>
<div class="t" style="left:208px;top:700px;">01.01.2008</div>
<div style="left:270px;top:699px;width:11px;height:13px;background:#f0f0f0;"></div>
<svg style="left:273px;top:705px" width="5" height="3"><path d="M0 0H5V1H4V2H3V3H2V2H1V1H0Z" fill="#000"/></svg>
<div style="left:347px;top:699px;width:11px;height:13px;background:#f0f0f0;"></div>
<svg style="left:350px;top:705px" width="5" height="3"><path d="M0 0H5V1H4V2H3V3H2V2H1V1H0Z" fill="#000"/></svg>
<div class="t" style="left:361px;width:60px;text-align:right;top:700px;">Нет</div>
<div style="left:188px;top:714px;width:17px;height:15px;background:#f0f0f0;border-top:1px solid #fff;border-left:1px solid #fff"></div>
<div style="left:188px;top:729px;width:1073px;height:1px;background:#a0a0a0;"></div>
<div style="left:205px;top:714px;width:1px;height:16px;background:#a0a0a0;"></div>
<svg style="left:192px;top:717px" width="11" height="11"><defs><linearGradient id="cg" x1="0" y1="0" x2="0" y2="1"><stop offset="0" stop-color="#e0e0e0"/><stop offset="1" stop-color="#fdfdfd"/></linearGradient></defs><rect x="0.5" y="0.5" width="9" height="9" rx="1.5" fill="url(#cg)" stroke="#a8a8a8"/></svg>
<div style="left:206px;top:714px;width:76px;height:15px;background:#e9e6e3;"></div>
<div style="left:282px;top:714px;width:1px;height:15px;background:#b0b0b0;"></div>
<div style="left:283px;top:714px;width:76px;height:15px;background:#e9e6e3;"></div>
<div style="left:359px;top:714px;width:1px;height:15px;background:#b0b0b0;"></div>
<div style="left:360px;top:714px;width:901px;height:15px;background:#e9e6e3;"></div>
<div class="t" style="left:208px;top:716px;">01.01.2008</div>
<div style="left:270px;top:715px;width:11px;height:13px;background:#f0f0f0;"></div>
<svg style="left:273px;top:721px" width="5" height="3"><path d="M0 0H5V1H4V2H3V3H2V2H1V1H0Z" fill="#000"/></svg>
<div style="left:347px;top:715px;width:11px;height:13px;background:#f0f0f0;"></div>
<svg style="left:350px;top:721px" width="5" height="3"><path d="M0 0H5V1H4V2H3V3H2V2H1V1H0Z" fill="#000"/></svg>
<div class="t" style="left:361px;width:60px;text-align:right;top:716px;">Нет</div>
<div style="left:188px;top:730px;width:17px;height:15px;background:#f0f0f0;border-top:1px solid #fff;border-left:1px solid #fff"></div>
<div style="left:188px;top:745px;width:1073px;height:1px;background:#a0a0a0;"></div>
<div style="left:205px;top:730px;width:1px;height:16px;background:#a0a0a0;"></div>
<svg style="left:192px;top:733px" width="11" height="11"><defs><linearGradient id="cg" x1="0" y1="0" x2="0" y2="1"><stop offset="0" stop-color="#e0e0e0"/><stop offset="1" stop-color="#fdfdfd"/></linearGradient></defs><rect x="0.5" y="0.5" width="9" height="9" rx="1.5" fill="url(#cg)" stroke="#a8a8a8"/></svg>
<div style="left:206px;top:730px;width:76px;height:15px;background:#fff;"></div>
<div style="left:282px;top:730px;width:1px;height:15px;background:#b0b0b0;"></div>
<div style="left:283px;top:730px;width:76px;height:15px;background:#fff;"></div>
<div style="left:359px;top:730px;width:1px;height:15px;background:#b0b0b0;"></div>
<div style="left:360px;top:730px;width:901px;height:15px;background:#fff;"></div>
<div class="t" style="left:208px;top:732px;">01.01.2008</div>
<div style="left:270px;top:731px;width:11px;height:13px;background:#f0f0f0;"></div>
<svg style="left:273px;top:737px" width="5" height="3"><path d="M0 0H5V1H4V2H3V3H2V2H1V1H0Z" fill="#000"/></svg>
<div style="left:347px;top:731px;width:11px;height:13px;background:#f0f0f0;"></div>
<svg style="left:350px;top:737px" width="5" height="3"><path d="M0 0H5V1H4V2H3V3H2V2H1V1H0Z" fill="#000"/></svg>
<div class="t" style="left:361px;width:60px;text-align:right;top:732px;">Нет</div>
<div style="left:187px;top:811px;width:1074px;height:33px;background:#f0f0f0;"></div>
<div style="left:184px;top:844px;width:1077px;height:2px;background:#fff;"></div>
<div style="left:183px;top:846px;width:1078px;height:1px;background:#d9d9d9;"></div>
<div style="left:414px;top:143px;width:847px;height:705px;background:#e9e6e3;border-left:1px solid #000;border-top:1px solid #000"></div>
<div class="t" style="left:417px;top:145px;">В соответствии с категорией</div>
<div style="left:415px;top:157px;width:846px;height:13px;background:#3399ff;"></div>
<div class="t" style="left:417px;top:158px;color:#fff">Остаток</div>
<div class="t" style="left:417px;top:171px;">Сформированный резерв</div>
<div class="t" style="left:417px;top:184px;">Обеспечение</div>
<div class="t" style="left:417px;top:197px;">Расчетный резерв</div>
<div class="t" style="left:417px;top:210px;">Расчетный резерв скорректированный на сумму обеспечения</div>
<div class="t" style="left:417px;top:223px;">Остаток на начало года</div>
<div class="t" style="left:417px;top:236px;">Остаток по плану погашений по сроку, оставшемуся до погашения</div>
<div class="t" style="left:417px;top:249px;">Остаток по плану погашений по сроку, оставшемуся до погашения (осн)</div>
<div class="t" style="left:417px;top:262px;">Остаток по плану погашений по сроку, оставшемуся до погашения (пролонг)</div>
<div class="t" style="left:417px;top:275px;">Остаток по плану погашений по сроку, оставшемуся до погашения (просроч)</div>
<div class="t" style="left:417px;top:288px;">Две привязки</div>
<div class="t" style="left:417px;top:301px;">Просроченная задолженность по сроку просрочки</div>
<div class="t" style="left:417px;top:314px;">Уплаченный НКД по ТП по сроку, оставшемуся до погашения</div>
<div class="t" style="left:417px;top:327px;">Уплаченный НКД по ИП по сроку, оставшемуся до погашения</div>
<div class="t" style="left:417px;top:340px;">Уплаченный НКД по НП по сроку, оставшемуся до погашения</div>
<div class="t" style="left:417px;top:353px;">Часть НП относящаяся к ТП  по сроку, оставшемуся до погашения</div>
<div class="t" style="left:417px;top:366px;">Часть НП относящаяся к ИП  по сроку, оставшемуся до погашения</div>
<div class="t" style="left:417px;top:379px;">НКД уплаченный по части НП, относящийся к ТП по сроку, оставшемуся до погашения</div>
<div class="t" style="left:417px;top:392px;">НКД уплаченный по части НП, относящийся к ИП по сроку, оставшемуся до погашения</div>
<div class="t" style="left:417px;top:405px;">НКД начисленный по части НП, относящийся к ТП по сроку, оставшемуся до погашения</div>
<div class="t" style="left:417px;top:418px;">НКД начисленный по части НП, относящийся к ИП по сроку, оставшемуся до погашения</div>
<div class="t" style="left:417px;top:431px;">Остаток по бумаге по сроку, оставшемуся до погашения</div>
<div class="t" style="left:417px;top:444px;">Остаток по плану погашений до востребования + по сроку, оставшемуся до погашения</div>
<div class="t" style="left:417px;top:457px;">% риска по счету НП, взвешенный по частям ТП и ИП</div>
<div class="t" style="left:417px;top:470px;">% риска по счету</div>
<div class="t" style="left:417px;top:483px;">Остаток * % риска (по 110-И)</div>
<div class="t" style="left:417px;top:496px;">Остаток, в части превышающей минимальный неснижаемый остаток (с учетом коэффициента)</div>
<div class="t" style="left:417px;top:509px;">Остаток по бумаге (средневзв.цена * количество) по сроку, оставшемуся до погашения</div>
<div class="t" style="left:417px;top:522px;">Резерв по НП относящийся к ИП</div>
<div class="t" style="left:417px;top:535px;">Резерв по НП относящийся к ТП</div>
<div class="t" style="left:417px;top:548px;">Рыночная стоимость бумаги (средневзвешенная цена * кол-во)</div>
<div class="t" style="left:417px;top:561px;">Рыночная стоимость НП в части ТП (средневзвешенная цена * кол-во)</div>
<div class="t" style="left:417px;top:574px;">Рыночная стоимость НП в части ИП (средневзвешенная цена * кол-во)</div>
<div class="t" style="left:417px;top:587px;">Сформированный резерв, пересчитанный в валюту счета</div>
<div class="t" style="left:417px;top:600px;">Разность переоценок по бумаге</div>
<div class="t" style="left:417px;top:613px;">Остаток по сроку нахождения на балансе</div>
<div class="t" style="left:417px;top:626px;">Справедливая стоимость по бумаге</div>
<div class="t" style="left:417px;top:639px;">Остаток по сделке по сроку, оставшемуся до погашения</div>
<div class="t" style="left:417px;top:652px;">Остаток по сделке по сроку, оставшемуся до погашения + до востребования</div>
<div class="t" style="left:417px;top:665px;">Справедливая стоимость по бумаге ИП с учетом срока по дате погашения бумаги</div>
<div class="t" style="left:417px;top:678px;">НКД начисленный с учетом срока по купону</div>
<div class="t" style="left:417px;top:691px;">Сформированный резерв * % риска по 110-И</div>
<div class="t" style="left:417px;top:704px;">Учет бумаги по цене приобретения</div>
<div class="t" style="left:417px;top:717px;">Минимальный неснижаемый остаток по счету</div>
<div class="t" style="left:417px;top:730px;">Остаток - остаток по счету амортизации</div>
<div class="t" style="left:417px;top:743px;">Амортизация</div>
<div class="t" style="left:417px;top:756px;">Остаток по ссуде по сроку, оставшемуся до погашения</div>
<div class="t" style="left:417px;top:769px;">Остаток по ссуде по сроку, оставшемуся до погашения (раб. дни)</div>
<div class="t" style="left:417px;top:782px;">Начисленные проценты</div>
<div class="t" style="left:417px;top:795px;">Остаток + нач. проценты</div>
<div class="t" style="left:417px;top:808px;">Ссуда + начисленные проценты</div>
<div class="t" style="left:417px;top:821px;">Суммы по бумаге по срокам, оставшимся до погашения</div>
<div class="t" style="left:417px;top:834px;">Сформированный резерв п. 8.2</div>
</body></html>
